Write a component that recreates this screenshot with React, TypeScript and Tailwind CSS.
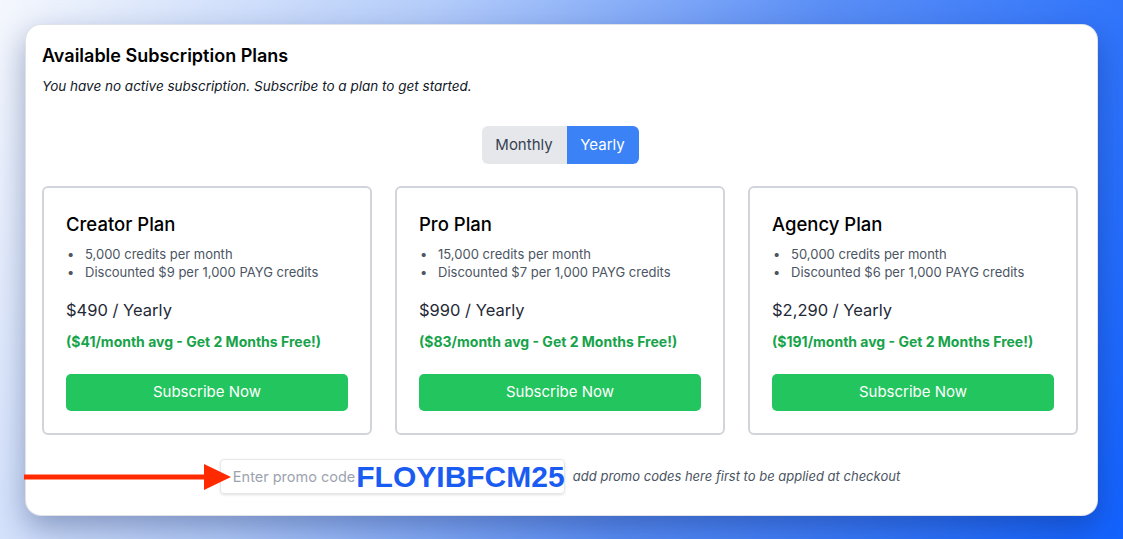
import { useState } from 'react'

const plans = [
  { name: 'Creator Plan', credits: '5,000', payg: '$9', price: '$490', avg: '$41' },
  { name: 'Pro Plan', credits: '15,000', payg: '$7', price: '$990', avg: '$83' },
  { name: 'Agency Plan', credits: '50,000', payg: '$6', price: '$2,290', avg: '$191' },
]

export default function App() {
  const [yearly, setYearly] = useState(true)

  return (
    <div className="min-h-screen w-full bg-[linear-gradient(112deg,#f4f7fd_0%,#b5cdfa_32%,#5a8ef6_62%,#1262ff_100%)] px-[25px] pt-[24px] pb-[25px] font-['Inter',sans-serif]">
      <div className="relative rounded-[16px] border border-[#d1d5db]/70 bg-white pt-[17px] pr-[19px] pb-[21px] pl-[16px] shadow-[0_12px_30px_rgba(10,30,90,0.35)]">
        <h1 className="text-[18px] leading-[28px] font-semibold text-black">Available Subscription Plans</h1>
        <p className="mt-[6px] text-[13.5px] leading-[20px] italic text-[#111827]">
          You have no active subscription. Subscribe to a plan to get started.
        </p>

        <div className="mt-[30px] flex justify-center">
          <div className="flex h-[38px] overflow-hidden rounded-[6px] text-[15px]">
            <button
              onClick={() => setYearly(false)}
              className={`w-[85px] ${yearly ? 'bg-[#e5e7eb] text-[#374151]' : 'bg-[#3b82f6] text-white'}`}
            >
              Monthly
            </button>
            <button
              onClick={() => setYearly(true)}
              className={`w-[72px] ${yearly ? 'bg-[#3b82f6] text-white' : 'bg-[#e5e7eb] text-[#374151]'}`}
            >
              Yearly
            </button>
          </div>
        </div>

        <div className="mt-[22px] grid grid-cols-3 gap-[23px]">
          {plans.map(p => (
            <div key={p.name} className="rounded-[6px] border-2 border-[#d1d5db] p-[22px]">
              <h2 className="text-[18.5px] leading-[28px] font-medium text-black">{p.name}</h2>
              <ul className="mt-[7px] text-[13px] leading-[18px] text-[#4b5563]">
                <li className="flex">
                  <span className="w-[19px] pl-[1px]">•</span>
                  {p.credits} credits per month
                </li>
                <li className="flex">
                  <span className="w-[19px] pl-[1px]">•</span>
                  Discounted {p.payg} per 1,000 PAYG credits
                </li>
              </ul>
              <p className="mt-[17px] text-[16.5px] leading-[24px] text-[#1f2937]">
                {p.price} / Yearly
              </p>
              <p className="mt-[10px] text-[14px] leading-[20px] font-bold text-[#16a34a]">
                ({p.avg}/month avg - Get 2 Months Free!)
              </p>
              <button className="mt-[22px] h-[37px] w-full rounded-[5px] bg-[#22c55e] text-[15px] text-white">
                Subscribe Now
              </button>
            </div>
          ))}
        </div>

        <div className="mt-[24px] flex items-center justify-center gap-[8px]">
          <div className="relative flex h-[35px] w-[345px] shrink-0 items-center whitespace-nowrap rounded-[4px] border border-[#e5e7eb] pl-[12px] shadow-sm">
            <span className="shrink-0 text-[14.5px] text-[#9ca3af]">Enter promo code</span>
            <span className="ml-[1px] shrink-0 font-['Liberation_Sans',sans-serif] text-[30px] leading-[30px] font-bold text-[#1a5cf2]">
              FLOYIBFCM25
            </span>
            <svg
              className="absolute top-1/2 right-[calc(100%-10px)] -translate-y-1/2"
              width="207"
              height="26"
              viewBox="0 0 207 26"
            >
              <rect x="0" y="10.5" width="182" height="5" fill="#ff2a00" />
              <polygon points="180,0 207,13 180,26" fill="#ff2a00" />
            </svg>
          </div>
          <span className="whitespace-nowrap text-[13px] italic text-[#4b5563]">
            add promo codes here first to be applied at checkout
          </span>
        </div>
      </div>
    </div>
  )
}
